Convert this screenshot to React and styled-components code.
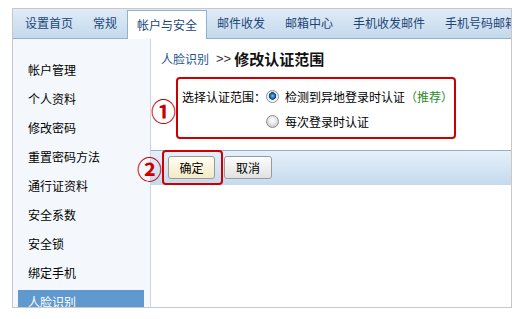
import styled, { createGlobalStyle } from "styled-components"

const GlobalStyle = createGlobalStyle`
    body {
        margin: 0;
        background: #fff;
        font-family: "Noto Sans CJK SC", "Liberation Sans", sans-serif;
        font-size: 12px;
    }
`

const tabs = ["设置首页", "常规", "帐户与安全", "邮件收发", "邮箱中心", "手机收发邮件", "手机号码邮箱"]
const menu = ["帐户管理", "个人资料", "修改密码", "重置密码方法", "通行证资料", "安全系数", "安全锁", "绑定手机", "人脸识别"]

const App = () => {
    return (
        <>
            <GlobalStyle />
            <Frame>
                <TabBar>
                    {tabs.map((t) => (
                        <Tab key={t} $active={t === "帐户与安全"}>{t}</Tab>
                    ))}
                </TabBar>

                <Body>
                    <Sidebar>
                        {menu.map((m) => (
                            <MenuItem key={m} $active={m === "人脸识别"}>{m}</MenuItem>
                        ))}
                    </Sidebar>

                    <Main>
                        <Breadcrumb>
                            <CrumbLink>人脸识别</CrumbLink>
                            <CrumbSep>&gt;&gt;</CrumbSep>
                            <CrumbTitle>修改认证范围</CrumbTitle>
                        </Breadcrumb>

                        <ScopeBox>
                            <Marker $left="-27px" $top="19px">①</Marker>
                            <OptionRow>
                                <Label>选择认证范围：</Label>
                                <Radio $checked />
                                <OptionText>检测到异地登录时认证</OptionText>
                                <Recommend>（推荐）</Recommend>
                            </OptionRow>
                            <OptionRow>
                                <Label />
                                <Radio />
                                <OptionText>每次登录时认证</OptionText>
                            </OptionRow>
                        </ScopeBox>

                        <ButtonBar>
                            <Highlight>
                                <Marker $left="-31px" $top="0px">②</Marker>
                                <Button $primary>确定</Button>
                            </Highlight>
                            <Button>取消</Button>
                        </ButtonBar>
                    </Main>
                </Body>
            </Frame>
        </>
    )
}

export default App

const Frame = styled.div`
    margin: 8px 0 0 12px;
    width: 500px;
    height: 300px;
    box-sizing: border-box;
    border: 1px solid #c8c8c8;
    display: flex;
    flex-direction: column;
    overflow: hidden;
`

const TabBar = styled.div`
    height: 30px;
    box-sizing: border-box;
    display: flex;
    align-items: flex-end;
    padding-left: 2px;
    background: linear-gradient(to bottom, #e0ebf7, #c4d9ec);
    border-bottom: 1px solid #8fb2cf;
    white-space: nowrap;
    flex-shrink: 0;
`

const Tab = styled.div`
    flex-shrink: 0;
    height: 29px;
    line-height: 28px;
    padding: 0 ${(p) => (p.$active ? "9px" : "10px")};
    color: #1a4677;
    font-size: 12px;
    box-sizing: border-box;
    background: ${(p) => (p.$active ? "#fff" : "transparent")};
    border: ${(p) => (p.$active ? "1px solid #8fb2cf" : "none")};
    border-bottom: none;
    margin-bottom: ${(p) => (p.$active ? "-1px" : "0")};
`

const Body = styled.div`
    flex: 1;
    display: flex;
    overflow: hidden;
`

const Sidebar = styled.div`
    width: 138px;
    flex-shrink: 0;
    box-sizing: border-box;
    background: #f4f8fc;
    border-right: 1px solid #c9d7e4;
    padding-top: 19px;
    overflow: hidden;
`

const MenuItem = styled.div`
    height: 24px;
    line-height: 24px;
    margin: 0 6px 5px 5px;
    padding-left: 10px;
    color: ${(p) => (p.$active ? "#fff" : "#000")};
    background: ${(p) => (p.$active ? "#5f99cf" : "transparent")};
`

const Main = styled.div`
    flex: 1;
    display: flex;
    flex-direction: column;
`

const Breadcrumb = styled.div`
    display: flex;
    align-items: center;
    height: 20px;
    margin-top: 9px;
    padding-left: 10px;
`

const CrumbLink = styled.span`
    color: #1d5694;
    font-size: 12px;
`

const CrumbSep = styled.span`
    margin: 0 3px 0 7px;
    font-family: "Liberation Sans", sans-serif;
    font-size: 13px;
    color: #333;
`

const CrumbTitle = styled.span`
    font-size: 15px;
    font-weight: bold;
    color: #111;
`

const ScopeBox = styled.div`
    position: relative;
    margin: 9px 0 0 25px;
    width: 280px;
    height: 62px;
    box-sizing: border-box;
    border: 2px solid #cc0000;
    border-radius: 4px;
    padding: 5px 0 3px 4px;
`

const Marker = styled.span`
    position: absolute;
    left: ${(p) => p.$left};
    top: ${(p) => p.$top};
    font-size: 25px;
    line-height: 25px;
    font-weight: bold;
    color: #cc0000;
    font-family: "Noto Sans CJK SC", "DejaVu Sans", sans-serif;
`

const OptionRow = styled.div`
    display: flex;
    align-items: center;
    height: 25px;
`

const Label = styled.span`
    width: 84px;
    flex-shrink: 0;
    color: #000;
`

const Radio = styled.span`
    width: 13px;
    height: 13px;
    box-sizing: border-box;
    border-radius: 50%;
    border: 1px solid #8c8c8c;
    background: ${(p) =>
        p.$checked
            ? "radial-gradient(circle at 50% 45%, #7fc0f0 0, #1d62ad 2.5px, #0f3f7a 3.5px, #e8e8e8 4px, #fff 6px)"
            : "radial-gradient(circle at 50% 40%, #ffffff 0, #e6e6e6 4px, #cfcfcf 6px)"};
    margin-right: 6px;
    flex-shrink: 0;
`

const OptionText = styled.span`
    color: #000;
`

const Recommend = styled.span`
    color: #2e8b2e;
`

const ButtonBar = styled.div`
    margin-top: 11px;
    height: 35px;
    box-sizing: border-box;
    border-top: 1px solid #90b1cd;
    background: linear-gradient(to bottom, #e5f0fa, #c4daed);
    display: flex;
    align-items: center;
    padding: 0 0 1px 17px;
    gap: 9px;
`

const Highlight = styled.div`
    position: relative;
    display: flex;

    &::after {
        content: "";
        position: absolute;
        left: -6px;
        top: -6px;
        right: -8px;
        bottom: -6px;
        border: 2px solid #cc0000;
        border-radius: 4px;
    }
`

const Button = styled.button`
    width: ${(p) => (p.$primary ? "47px" : "48px")};
    height: 23px;
    padding: 0;
    border: 1px solid #9a9a9a;
    border-radius: 3px;
    font-family: "Noto Sans CJK SC", sans-serif;
    font-size: 12px;
    color: #000;
    background: ${(p) =>
        p.$primary
            ? "linear-gradient(to bottom, #fffef2, #f2eac2)"
            : "linear-gradient(to bottom, #fdfdfd, #e1e1e1)"};
    cursor: pointer;
`
